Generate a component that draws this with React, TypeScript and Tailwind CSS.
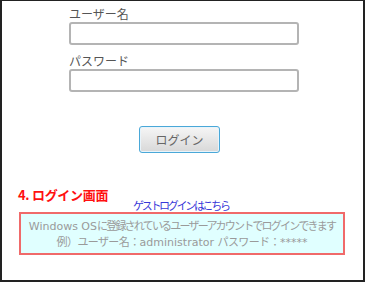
import React from "react";

const jp = { fontFamily: '"Noto Sans CJK JP", "Liberation Sans", sans-serif' };
const lat = { fontFamily: '"DejaVu Sans", "Noto Sans CJK JP", sans-serif' };

function J({ children, t = "tracking-[-1.8px]" }: { children: React.ReactNode; t?: string }) {
  return <span className={t}>{children}</span>;
}
function L({ children }: { children: React.ReactNode }) {
  return (
    <span className="tracking-[0px]" style={lat}>
      {children}
    </span>
  );
}

export default function App() {
  return (
    <div
      className="w-[365px] h-[282px] bg-white border-t border-l-2 border-r-2 border-b-2 border-[#222] flex flex-col"
      style={jp}
    >
      <div className="ml-[67px] mt-[4px] flex flex-col">
        <div className="text-[12px] leading-[17px] text-[#555]">ユーザー名</div>
        <div className="w-[230px] h-[23px] border-2 border-[#b4b4b4] rounded-[3px] bg-white" />
        <div className="mt-[7px] text-[12px] leading-[17px] text-[#555]">パスワード</div>
        <div className="w-[230px] h-[23px] border-2 border-[#b4b4b4] rounded-[3px] bg-white" />
      </div>
      <div className="ml-[137px] mt-[34px]">
        <div className="w-[81px] h-[27px] rounded-[3px] border border-[#4aa8d8] bg-gradient-to-b from-[#f6f6f6] to-[#d8d8d8] flex items-center justify-center text-[12px] text-[#666] tracking-[0px] shadow-[inset_0_0_0_1px_#e8f4fb]">
          ログイン
        </div>
      </div>
      <div className="ml-[16px] mt-[34px] text-[13px] leading-[16px] font-bold text-[#ff1010] tracking-[-0.3px]">
        4. ログイン画面
      </div>
      <div className="ml-[131px] -mt-[5px] text-[11px] leading-[14px] text-[#3838d8] tracking-[-2.3px]">
        ゲストログインはこちら
      </div>
      <div className="ml-[17px] mt-[0px] w-[326px] h-[43px] border-2 border-[#f06a6a] bg-[#e0ffff] flex flex-col items-center justify-center text-[11px] leading-[14px] text-[#9a9a9a] whitespace-nowrap">
        <div>
          <L>Windows OS</L>
          <J>に登録されているユーザーアカウントでログインできます</J>
        </div>
        <div>
          <J t="tracking-[-0.6px]">例）ユーザー名：</J>
          <L>administrator </L>
          <J t="tracking-[-0.6px]">パスワード：</J>
          <L>*****</L>
        </div>
      </div>
    </div>
  );
}
